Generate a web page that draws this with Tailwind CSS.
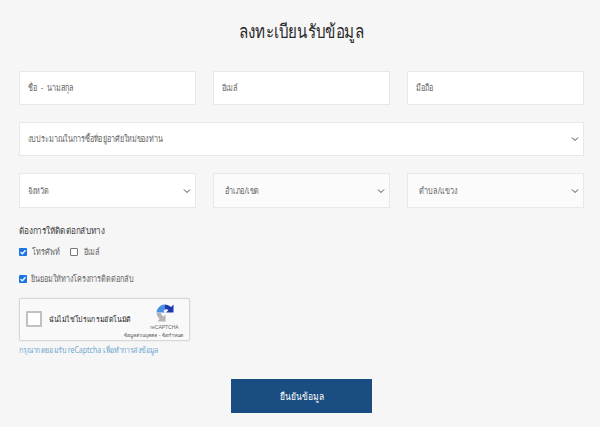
<!DOCTYPE html>
<html lang="th">
<head>
<meta charset="utf-8">
<script src="https://cdn.jsdelivr.net/npm/@tailwindcss/browser@4"></script>
</head>
<body class="m-0">
<div class="w-[600px] h-[427px] overflow-hidden bg-[#f6f6f6] pl-[19px] pr-[16px] font-['Noto_Sans','Liberation_Sans',sans-serif] text-[#666]">
  <h1 class="h-[71px] pt-[17px] text-center text-[19px] leading-[28px] text-[#2a2a2a] scale-x-[0.8]">ลงทะเบียนรับข้อมูล</h1>
  <div class="grid grid-cols-3 gap-x-[17px] gap-y-[17px] text-[9px]">
    <div class="h-[34px] flex items-center pl-[8px] bg-white border border-[#e8e8e8]"><span class="origin-left scale-x-[0.81]">ชื่อ&nbsp; -&nbsp; นามสกุล</span></div>
    <div class="h-[34px] flex items-center pl-[8px] bg-white border border-[#e8e8e8]"><span class="origin-left scale-x-[0.81]">อีเมล์</span></div>
    <div class="h-[34px] flex items-center pl-[8px] bg-white border border-[#e8e8e8]"><span class="origin-left scale-x-[0.81]">มือถือ</span></div>
    <div class="col-span-3 h-[34px] flex items-center justify-between pl-[8px] pr-[3px] bg-white border border-[#e8e8e8]">
      <span class="origin-left scale-x-[0.81]">งบประมาณในการซื้อที่อยู่อาศัยใหม่ของท่าน</span>
      <svg width="10" height="10" viewBox="0 0 10 10" fill="none" stroke="#444" stroke-width="1"><path d="M2 3.5 5 6.5 8 3.5"/></svg>
    </div>
    <div class="h-[35px] flex items-center justify-between pl-[8px] pr-[3px] bg-white border border-[#e8e8e8]">
      <span class="origin-left scale-x-[0.81]">จังหวัด</span>
      <svg width="10" height="10" viewBox="0 0 10 10" fill="none" stroke="#444" stroke-width="1"><path d="M2 3.5 5 6.5 8 3.5"/></svg>
    </div>
    <div class="h-[35px] flex items-center justify-between pl-[11px] pr-[3px] bg-[#fbfbfb] border border-[#e8e8e8]">
      <span class="origin-left scale-x-[0.81]">อำเภอ/เขต</span>
      <svg width="10" height="10" viewBox="0 0 10 10" fill="none" stroke="#444" stroke-width="1"><path d="M2 3.5 5 6.5 8 3.5"/></svg>
    </div>
    <div class="h-[35px] flex items-center justify-between pl-[11px] pr-[3px] bg-[#fbfbfb] border border-[#e8e8e8]">
      <span class="origin-left scale-x-[0.81]">ตำบล/แขวง</span>
      <svg width="10" height="10" viewBox="0 0 10 10" fill="none" stroke="#444" stroke-width="1"><path d="M2 3.5 5 6.5 8 3.5"/></svg>
    </div>
  </div>
  <p class="mt-[15px] h-[16px] text-[9px] leading-[16px] font-medium text-[#3a3a3a] origin-left scale-x-[0.9]">ต้องการให้ติดต่อกลับทาง</p>
  <div class="mt-[5px] h-[16px] flex items-center text-[9px]">
    <span class="w-[8px] h-[8px] shrink-0 rounded-[1px] bg-[#1a73e8] flex items-center justify-center"><svg width="8" height="8" viewBox="0 0 8 8" fill="none" stroke="#fff" stroke-width="1.3"><path d="M1.5 4.1 3.3 5.8 6.5 2.2"/></svg></span>
    <span class="ml-[5px] w-[26px] whitespace-nowrap origin-left scale-x-[0.81]">โทรศัพท์</span>
    <span class="ml-[12px] w-[8px] h-[8px] shrink-0 rounded-[1px] bg-white border border-[#777]"></span>
    <span class="ml-[6px] origin-left scale-x-[0.81]">อีเมล์</span>
  </div>
  <div class="mt-[11px] h-[16px] flex items-center text-[9px]">
    <span class="w-[8px] h-[8px] shrink-0 rounded-[1px] bg-[#1a73e8] flex items-center justify-center"><svg width="8" height="8" viewBox="0 0 8 8" fill="none" stroke="#fff" stroke-width="1.3"><path d="M1.5 4.1 3.3 5.8 6.5 2.2"/></svg></span>
    <span class="ml-[4px] origin-left scale-x-[0.81]">ยินยอมให้ทางโครงการติดต่อกลับ</span>
  </div>
  <div class="mt-[11px] w-[171px] h-[43px] flex bg-[#f9f9f9] border border-[#d6d6d6] rounded-[2px] shadow-[0_0_2px_rgba(0,0,0,0.1)]">
    <span class="ml-[6px] mt-[12px] w-[16px] h-[16px] bg-white border-2 border-[#c1c1c1] rounded-[1px] shrink-0"></span>
    <span class="ml-[7px] mt-[12px] text-[7.5px] leading-[16px] text-[#222] w-[92px] font-medium whitespace-nowrap origin-left scale-x-[0.92]">ฉันไม่ใช่โปรแกรมอัตโนมัติ</span>
    <div class="w-[47px] flex flex-col items-center pt-[5px]">
      <svg width="18" height="18" viewBox="0 0 18 18" fill="none">
        <path d="M9 0.5a8.5 8.5 0 0 1 6 2.5L17.5 0.5V8.5H10l2.5-2.5A5 5 0 0 0 9 5.5z" fill="#1c3aa9"/>
        <path d="M0.5 9A8.5 8.5 0 0 1 9 0.5V5.5L7.5 7 9 8.5H0.5z" fill="#4a90e2"/>
        <path d="M0.5 9H5a4.5 4.5 0 0 0 2.5 3.5L9.5 10.5V17.5H1.5L3.5 15A8.5 8.5 0 0 1 0.5 9z" fill="#b4b4b4"/>
      </svg>
      <span class="text-[5px] leading-[8px] mt-[1px] text-[#666] font-['Liberation_Sans',sans-serif]">reCAPTCHA</span>
      <span class="text-[5px] leading-[6px] mt-[1px] -ml-[22px] text-[#555] whitespace-nowrap">ข้อมูลส่วนบุคคล - ข้อกำหนด</span>
    </div>
  </div>
  <p class="mt-[1px] h-[16px] text-[8px] leading-[16px] text-[#6fa8cf] whitespace-nowrap origin-left scale-x-[0.87]">กรุณากดยอมรับ reCaptcha เพื่อทำการส่งข้อมูล</p>
  <div class="mt-[21px] flex justify-center">
    <div class="w-[141px] h-[34px] flex items-center justify-center bg-[#1a4d82] text-white text-[10px]"><span class="scale-x-[0.85]">ยืนยันข้อมูล</span></div>
  </div>
</div>
</body>
</html>
